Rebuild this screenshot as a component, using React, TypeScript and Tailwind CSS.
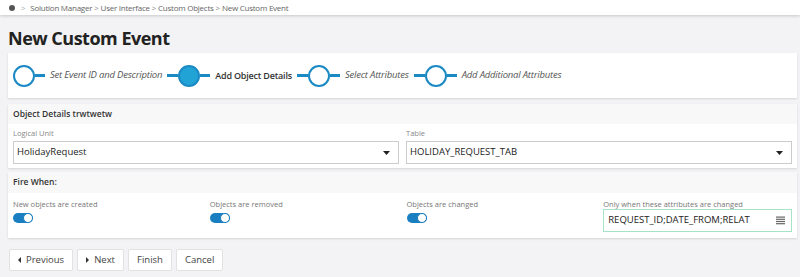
import React from 'react';

const steps = [
  { label: 'Set Event ID and Description', active: false },
  { label: 'Add Object Details', active: true },
  { label: 'Select Attributes', active: false },
  { label: 'Add Additional Attributes', active: false },
];

const Step: React.FC<{ label: string; active: boolean; first: boolean }> = ({ label, active, first }) => (
  <div className="flex items-center">
    {!first && <div className="w-[11px] h-[3px] bg-[#1b8ac4]" />}
    <div
      className={`w-[22px] h-[22px] rounded-full border-2 border-[#1b8ac4] ${active ? 'bg-[#22a3d6]' : 'bg-white'}`}
    />
    <div className="w-[10px] h-[3px] bg-[#1b8ac4]" />
    <span
      className={`ml-[5px] mr-[5px] tracking-[-0.2px] ${
        active ? 'text-[9px] text-[#333] font-semibold' : 'text-[9.5px] text-[#555] italic'
      }`}
    >
      {label}
    </span>
  </div>
);

const Toggle: React.FC = () => (
  <div className="relative w-[20px] h-[10px] rounded-full bg-[#1a7fc1]">
    <div className="absolute right-0 top-0 w-[10px] h-[10px] rounded-full bg-white border border-[#1a7fc1]" />
  </div>
);

const Select: React.FC<{ label: string; value: string }> = ({ label, value }) => (
  <div className="flex flex-col">
    <span className="text-[7.5px] text-[#888] h-[11px] leading-[11px] mb-[2px]">{label}</span>
    <div className="h-[23px] border border-[#ccc] bg-white flex items-center justify-between pl-[3px] pr-[8px]">
      <span className="text-[9.5px] text-[#222]">{value}</span>
      <svg width="7" height="4" viewBox="0 0 7 4">
        <path d="M0 0h7L3.5 4z" fill="#222" />
      </svg>
    </div>
  </div>
);

const Btn: React.FC<{ children: React.ReactNode }> = ({ children }) => (
  <button className="h-[22px] px-[8px] bg-white border border-[#e2e2e2] rounded-[2px] text-[9.5px] text-[#444] flex items-center gap-[5px]">
    {children}
  </button>
);

const Sep = () => <span className="mx-[2px] text-[#888]">&gt;</span>;

export default function App() {
  return (
    <div
      className="w-[800px] h-[277px] bg-[#f3f2f4] overflow-hidden"
      style={{ fontFamily: '"Open Sans", "Noto Sans", sans-serif' }}
    >
      <div className="h-[15px] bg-white shadow-[0_1px_3px_rgba(0,0,0,0.18)] flex items-center pl-[9px] text-[8px] tracking-[-0.25px] text-[#666]">
        <span className="w-[6px] h-[6px] rounded-full bg-[#555]" />
        <span className="ml-[6px] mr-[5px] text-[#aaa]">&gt;</span>
        <span>Solution Manager</span>
        <Sep />
        <span>User Interface</span>
        <Sep />
        <span>Custom Objects</span>
        <Sep />
        <span>New Custom Event</span>
      </div>

      <div className="pl-[8px] pr-[3px]">
        <h1 className="text-[18px] tracking-[-0.5px] font-bold text-[#222] mt-[10px] leading-[26px] h-[28px]">
          New Custom Event
        </h1>

        <div className="bg-white h-[45px] flex items-center pl-[5px] shadow-[0_1px_2px_rgba(0,0,0,0.12)]">
          {steps.map((s, i) => (
            <Step key={s.label} label={s.label} active={s.active} first={i === 0} />
          ))}
        </div>

        <div className="mt-[6px] bg-white shadow-[0_1px_2px_rgba(0,0,0,0.12)]">
          <div className="h-[20px] bg-[#f8f8f8] flex items-center px-[5px] text-[8.5px] font-semibold text-[#333]">
            Object Details trwtwetw
          </div>
          <div className="grid grid-cols-2 gap-[7px] px-[5px] pt-[4px] pb-[4px]">
            <Select label="Logical Unit" value="HolidayRequest" />
            <Select label="Table" value="HOLIDAY_REQUEST_TAB" />
          </div>
        </div>

        <div className="mt-[4px] bg-white shadow-[0_1px_2px_rgba(0,0,0,0.12)]">
          <div className="h-[21px] bg-[#f8f8f8] flex items-center px-[5px] text-[8.5px] font-semibold text-[#333]">
            Fire When:
          </div>
          <div className="grid grid-cols-4 gap-[8px] px-[5px] pt-[6px] pb-[6px]">
            {['New objects are created', 'Objects are removed', 'Objects are changed'].map((l) => (
              <div key={l} className="flex flex-col">
                <span className="text-[7.5px] text-[#777] h-[11px] leading-[11px] mb-[3px]">{l}</span>
                <Toggle />
              </div>
            ))}
            <div className="flex flex-col">
              <span className="text-[7.5px] text-[#777] h-[11px] leading-[11px] mb-[-1px]">
                Only when these attributes are changed
              </span>
              <div className="h-[23px] border border-[#a7e3c7] flex items-center justify-between pl-[4px] pr-[6px]">
                <span className="text-[9.5px] text-[#222]">REQUEST_ID;DATE_FROM;RELAT</span>
                <svg width="9" height="9" viewBox="0 0 9 9">
                  <rect x="0" y="0.5" width="9" height="1.2" fill="#666" />
                  <rect x="0" y="2.7" width="9" height="1.2" fill="#666" />
                  <rect x="0" y="4.9" width="9" height="1.2" fill="#666" />
                  <rect x="0" y="7.1" width="9" height="1.2" fill="#666" />
                </svg>
              </div>
            </div>
          </div>
        </div>

        <div className="mt-[11px] flex gap-[4px] pl-[1px]">
          <Btn>
            <svg width="3" height="6" viewBox="0 0 3 6"><path d="M3 0v6L0 3z" fill="#333" /></svg>
            Previous
          </Btn>
          <Btn>
            <svg width="3" height="6" viewBox="0 0 3 6"><path d="M0 0v6L3 3z" fill="#333" /></svg>
            Next
          </Btn>
          <Btn>Finish</Btn>
          <Btn>Cancel</Btn>
        </div>
      </div>
    </div>
  );
}
